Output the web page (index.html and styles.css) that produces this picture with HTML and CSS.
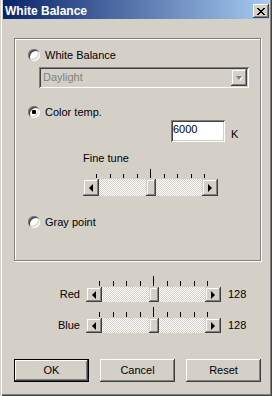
FILE: index.html
```html
<!DOCTYPE html>
<html>
<head>
<meta charset="utf-8">
<link rel="stylesheet" href="styles.css">
</head>
<body>
<div class="window">
  <div class="titlebar">
    <span class="title">White Balance</span>
    <span class="close"><svg width="8" height="7" viewBox="0 0 8 7" shape-rendering="crispEdges"><path d="M0 0h2v1H0zM6 0h2v1H6zM1 1h2v1H1zM5 1h2v1H5zM2 2h4v1H2zM3 3h2v1H3zM2 4h4v1H2zM1 5h2v1H1zM5 5h2v1H5zM0 6h2v1H0zM6 6h2v1H6z"/></svg></span>
  </div>
  <div class="group">
    <div class="radio-row r1"><span class="radio"></span><span class="rtext">White Balance</span></div>
    <div class="combo">
      <span class="combo-text">Daylight</span>
      <span class="combo-btn"><span class="arrow-down"></span></span>
    </div>
    <div class="radio-row r2"><span class="radio checked"></span><span class="rtext">Color temp.</span></div>
    <div class="temp-row"><span class="edit">6000</span><span class="unit">K</span></div>
    <div class="fine-label">Fine tune</div>
    <div class="slider fine">
      <div class="ticks"><i></i><i></i><i></i><i></i><i class="big"></i><i></i><i></i><i></i><i></i></div>
      <div class="sb">
        <span class="sb-btn"><span class="arr-l"></span></span>
        <span class="track"><span class="thumb"></span></span>
        <span class="sb-btn"><span class="arr-r"></span></span>
      </div>
    </div>
    <div class="radio-row r3"><span class="radio"></span><span class="rtext">Gray point</span></div>
  </div>
  <div class="sliders">
    <div class="srow red">
      <span class="slabel">Red</span>
      <div class="slider small">
        <div class="ticks"><i></i><i></i><i></i><i></i><i class="big"></i><i></i><i></i><i></i><i></i></div>
        <div class="sb">
          <span class="sb-btn"><span class="arr-l"></span></span>
          <span class="track"><span class="thumb"></span></span>
          <span class="sb-btn"><span class="arr-r"></span></span>
        </div>
      </div>
      <span class="sval">128</span>
    </div>
    <div class="srow blue">
      <span class="slabel">Blue</span>
      <div class="slider small">
        <div class="ticks"><i></i><i></i><i></i><i></i><i class="big"></i><i></i><i></i><i></i><i></i></div>
        <div class="sb">
          <span class="sb-btn"><span class="arr-l"></span></span>
          <span class="track"><span class="thumb"></span></span>
          <span class="sb-btn"><span class="arr-r"></span></span>
        </div>
      </div>
      <span class="sval">128</span>
    </div>
  </div>
  <div class="buttons">
    <span class="btn default">OK</span>
    <span class="btn">Cancel</span>
    <span class="btn">Reset</span>
  </div>
</div>
</body>
</html>
```
FILE: styles.css
```css
body {
  margin: 0;
  font-family: "Liberation Sans", Arial, sans-serif;
  font-size: 11px;
  color: #000;
}
.window {
  width: 272px;
  height: 396px;
  box-sizing: border-box;
  padding: 0 3px 3px 3px;
  background: #d4d0c8;
  box-shadow: inset 1px 0 0 #d4d0c8, inset 2px 0 0 #fff, inset -1px -1px 0 #404040, inset -2px -2px 0 #808080;
  display: flex;
  flex-direction: column;
}
.titlebar {
  height: 19px;
  flex: none;
  background: linear-gradient(90deg, #0a246a, #a6caf0);
  display: flex;
  align-items: flex-start;
  justify-content: space-between;
}
.title {
  color: #fff;
  font-weight: bold;
  font-size: 12px;
  line-height: 19px;
  padding: 2px 0 0 2px;
}
.close {
  width: 16px;
  height: 14px;
  margin-top: 4px;
  background: #d4d0c8;
  box-shadow: inset -1px -1px 0 #404040, inset 1px 1px 0 #fff, inset -2px -2px 0 #808080, inset 2px 2px 0 #d4d0c8;
  display: flex;
  align-items: center;
  justify-content: center;
}
.close svg { display: block; margin-left: -1px; }
.group {
  margin: 19px 0 0 11px;
  width: 247px;
  height: 223px;
  flex: none;
  box-sizing: border-box;
  border: 1px solid #808080;
  box-shadow: 1px 1px 0 #fff, inset 1px 1px 0 #fff;
  padding-top: 10px;
  display: flex;
  flex-direction: column;
  align-items: flex-start;
}
.radio-row {
  display: flex;
  align-items: center;
  gap: 5px;
  margin-left: 13px;
  height: 12px;
}
.rtext { line-height: 12px; }
.r2 { margin-top: 18px; }
.r3 { margin-top: 20px; }
.radio {
  width: 12px;
  height: 12px;
  flex: none;
  border-radius: 50%;
  background: #fff;
  box-shadow: inset 1px 1px 0 #808080, inset -1px -1px 0 #fff, inset 2px 2px 0 #404040, inset -2px -2px 0 #d4d0c8;
  display: flex;
  align-items: center;
  justify-content: center;
}
.radio.checked::after {
  content: "";
  width: 4px;
  height: 4px;
  border-radius: 1px;
  background: #000;
}
.combo {
  margin: 6px 0 0 24px;
  width: 210px;
  height: 21px;
  box-sizing: border-box;
  padding: 2px;
  background: #d4d0c8;
  box-shadow: inset 1px 1px 0 #808080, inset -1px -1px 0 #fff, inset 2px 2px 0 #404040, inset -2px -2px 0 #d4d0c8;
  display: flex;
}
.combo-text {
  flex: 1;
  color: #808080;
  padding-left: 2px;
  line-height: 17px;
}
.combo-btn {
  width: 16px;
  height: 17px;
  box-shadow: inset -1px -1px 0 #404040, inset 1px 1px 0 #d4d0c8, inset -2px -2px 0 #808080, inset 2px 2px 0 #fff;
  display: flex;
  align-items: center;
  justify-content: center;
}
.arrow-down {
  width: 0;
  height: 0;
  border-left: 3.5px solid transparent;
  border-right: 3.5px solid transparent;
  border-top: 4px solid #808080;
  filter: drop-shadow(1px 1px 0 #fff);
}
.temp-row {
  display: flex;
  align-items: flex-start;
  margin: 2px 0 0 156px;
}
.edit {
  width: 54px;
  height: 22px;
  box-sizing: border-box;
  padding: 2px 0 0 2px;
  line-height: 14px;
  background: #fff;
  box-shadow: inset 1px 1px 0 #808080, inset -1px -1px 0 #fff, inset 2px 2px 0 #404040, inset -2px -2px 0 #d4d0c8;
}
.unit {
  margin: 8px 0 0 6px;
  line-height: 12px;
}
.fine-label {
  margin: 10px 0 0 68px;
  line-height: 12px;
}
.slider {
  width: 135px;
  display: flex;
  flex-direction: column;
}
.fine { margin: 5px 0 0 68px; }
.ticks {
  display: flex;
  justify-content: space-between;
  align-items: flex-end;
  width: 109px;
  height: 9px;
  margin: 0 0 1px 13px;
}
.ticks i {
  width: 1px;
  height: 4px;
  background: #000;
}
.ticks i.big { height: 9px; }
.small .ticks { height: 10px; }
.small .ticks i { height: 5px; }
.small .ticks i.big { height: 10px; }
.sb {
  display: flex;
  height: 17px;
}
.small .sb { height: 15px; }
.sb-btn {
  width: 16px;
  flex: none;
  background: #d4d0c8;
  box-shadow: inset -1px -1px 0 #404040, inset 1px 1px 0 #d4d0c8, inset -2px -2px 0 #808080, inset 2px 2px 0 #fff;
  display: flex;
  align-items: center;
  justify-content: center;
}
.arr-l, .arr-r {
  width: 0;
  height: 0;
  border-top: 4px solid transparent;
  border-bottom: 4px solid transparent;
}
.arr-l { border-right: 4px solid #000; margin-left: -1px; }
.arr-r { border-left: 4px solid #000; }
.track {
  flex: 1;
  display: flex;
  justify-content: center;
  background: repeating-conic-gradient(#fff 0 25%, #d4d0c8 0 50%) 0 0 / 2px 2px;
}
.thumb {
  width: 10px;
  background: #d4d0c8;
  box-shadow: inset -1px -1px 0 #404040, inset 1px 1px 0 #d4d0c8, inset -2px -2px 0 #808080, inset 2px 2px 0 #fff;
}
.sliders {
  display: flex;
  flex-direction: column;
  margin-top: 15px;
}
.srow {
  display: flex;
  align-items: flex-end;
}
.blue { margin-top: 5px; }
.slabel {
  width: 77px;
  text-align: right;
  line-height: 15px;
}
.srow .slider { margin-left: 6px; }
.sval {
  margin-left: 7px;
  line-height: 15px;
}
.buttons {
  display: flex;
  justify-content: space-between;
  width: 247px;
  margin: 26px 0 0 11px;
}
.btn {
  width: 75px;
  height: 23px;
  line-height: 23px;
  text-align: center;
  box-shadow: inset -1px -1px 0 #404040, inset 1px 1px 0 #fff, inset -2px -2px 0 #808080, inset 2px 2px 0 #d4d0c8;
}
.btn.default {
  box-shadow: inset 0 0 0 1px #000, inset -2px -2px 0 #404040, inset 2px 2px 0 #fff, inset -3px -3px 0 #808080, inset 3px 3px 0 #d4d0c8;
}
```
